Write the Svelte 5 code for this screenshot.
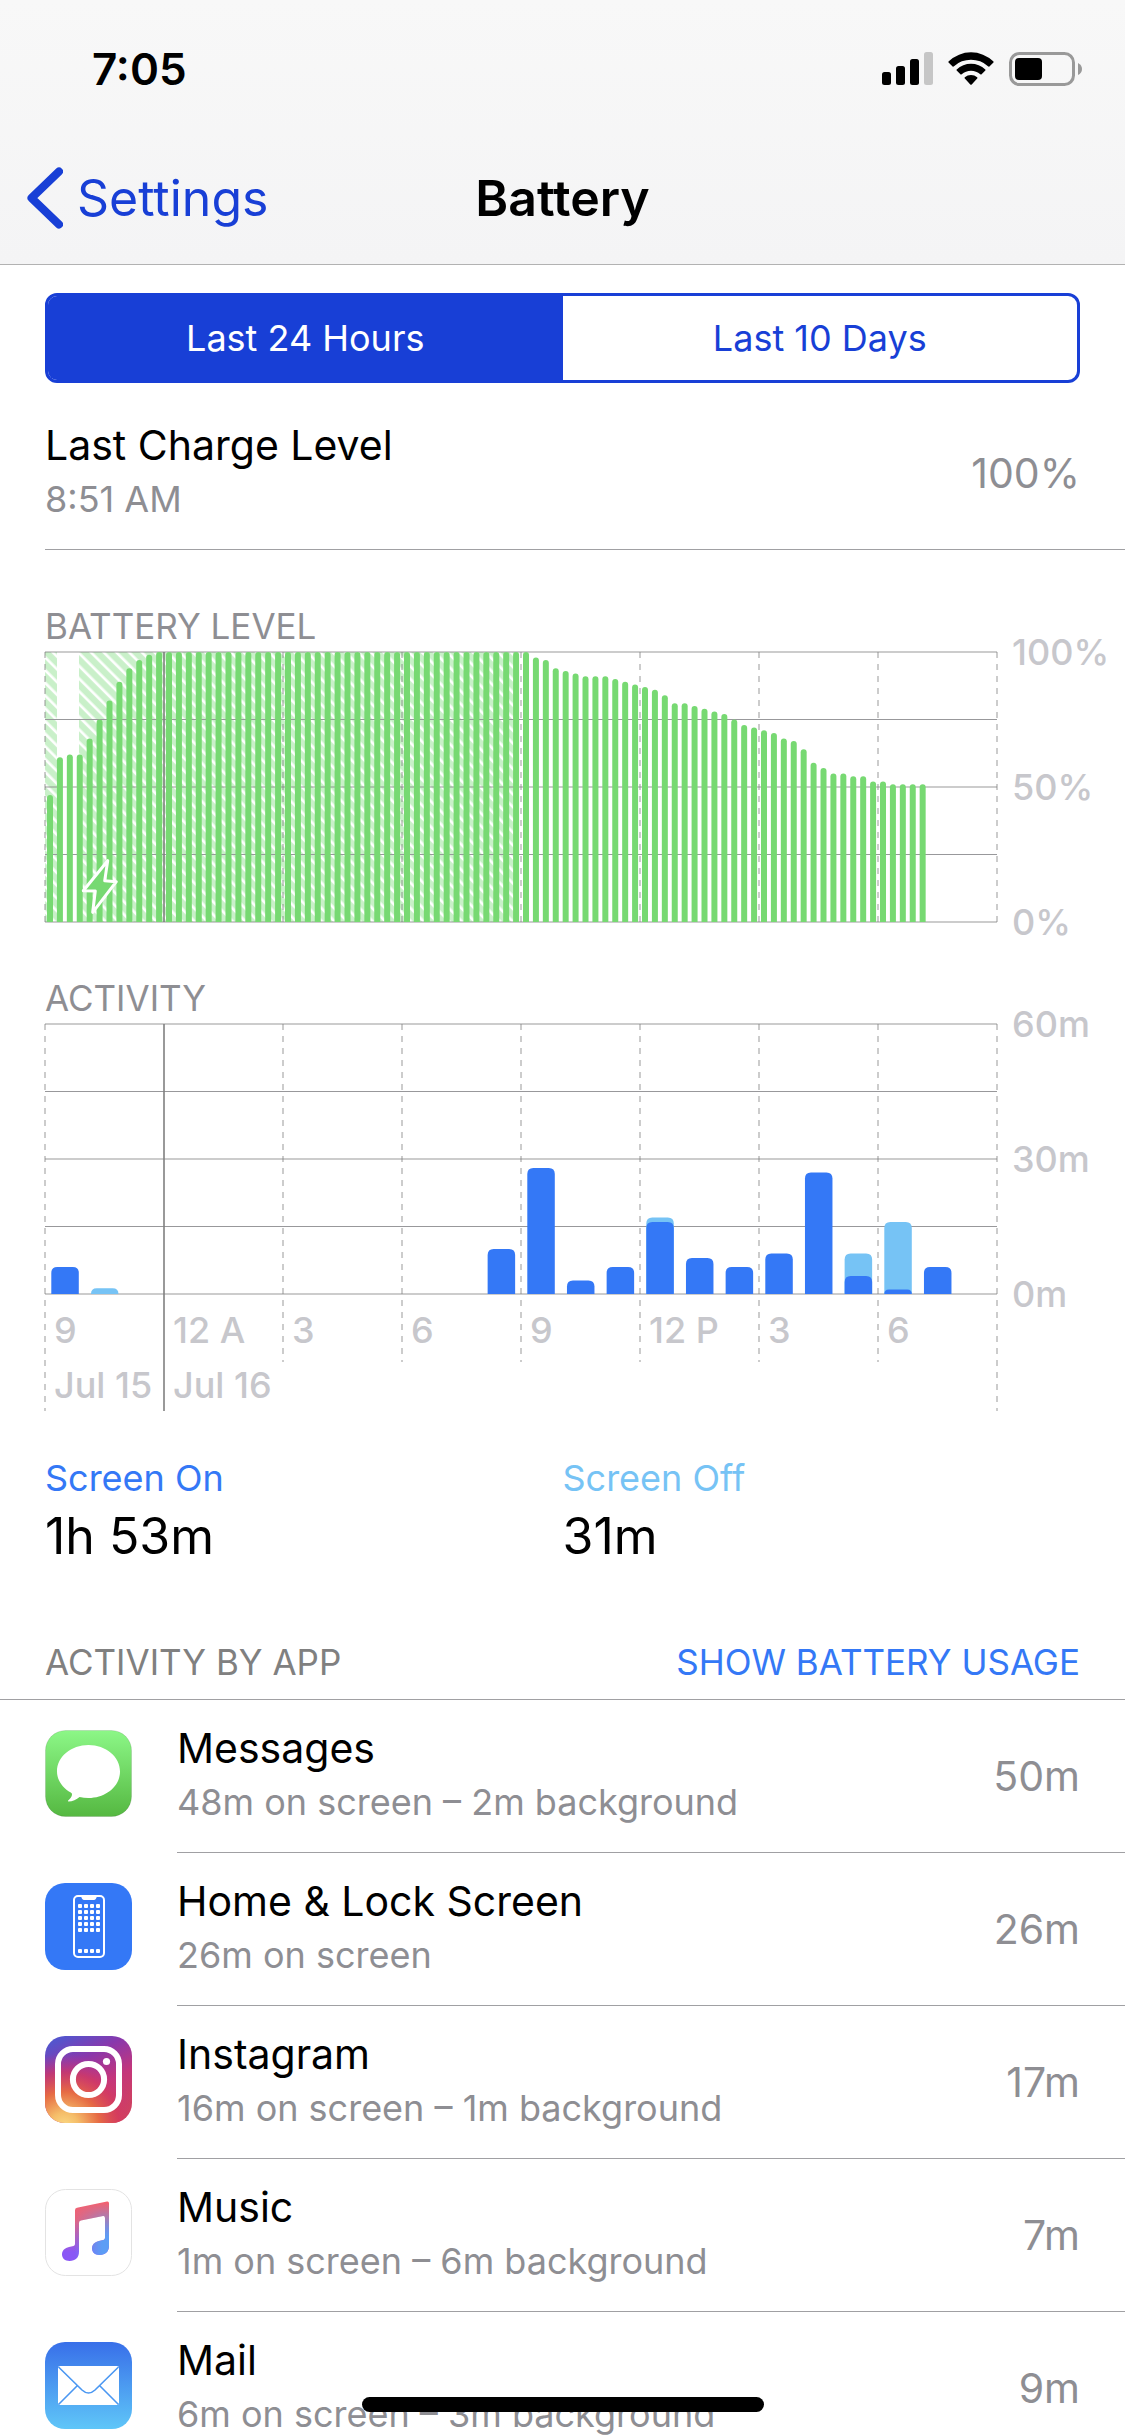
<script lang="ts">
  interface Hour {
    on: number
    off: number
  }

  interface AppUsage {
    id: string
    name: string
    detail: string
    total: string
  }

  const PLOT_WIDTH = 952
  const PLOT_HEIGHT = 270
  const BAR_STEP = PLOT_WIDTH / 96
  const HOUR_STEP = PLOT_WIDTH / 24

  // One sample every 15 minutes
  const levels: number[] = [
    47, 61, 62, 62, 68, 75, 82, 89, 94, 97, 99,
    ...Array(38).fill(100),
    98, 97, 94, 93, 92, 91, 91, 91, 90, 89, 88, 87, 86, 84, 81, 81, 80, 79, 78, 77,
    75, 73, 72, 71, 70, 68, 67, 64, 59, 57, 55, 55, 54, 54, 52, 52, 51, 51, 51, 51
  ]

  const charging = [
    { from: 0, to: 12 },
    { from: 34, to: 473 }
  ]

  const none: Hour = { on: 0, off: 0 }
  const hours: Hour[] = [
    { on: 6, off: 0 },
    { on: 0, off: 1.3 },
    ...Array(9).fill(none),
    { on: 10, off: 0 },
    { on: 28, off: 0 },
    { on: 3, off: 0 },
    { on: 6, off: 0 },
    { on: 16, off: 1 },
    { on: 8, off: 0 },
    { on: 6, off: 0 },
    { on: 9, off: 0 },
    { on: 27, off: 0 },
    { on: 4, off: 5 },
    { on: 1, off: 15 },
    { on: 6, off: 0 }
  ]

  const ticks = ['9', '12 A', '3', '6', '9', '12 P', '3', '6', '']

  const apps: AppUsage[] = [
    { id: 'messages', name: 'Messages', detail: '48m on screen – 2m background', total: '50m' },
    { id: 'home', name: 'Home & Lock Screen', detail: '26m on screen', total: '26m' },
    { id: 'instagram', name: 'Instagram', detail: '16m on screen – 1m background', total: '17m' },
    { id: 'music', name: 'Music', detail: '1m on screen – 6m background', total: '7m' },
    { id: 'mail', name: 'Mail', detail: '6m on screen – 3m background', total: '9m' }
  ]

  let range = $state('24h')

  // Bar standing on the baseline with rounded top corners
  function bar(x: number, width: number, height: number, radius: number) {
    const r = Math.min(radius, height)
    const top = PLOT_HEIGHT - height
    return `M${x} ${PLOT_HEIGHT}V${top + r}q0 ${-r} ${r} ${-r}h${width - 2 * r}q${r} 0 ${r} ${r}V${PLOT_HEIGHT}z`
  }
</script>

{#snippet gridLines()}
  <path class="line major" d="M0 0H952M0 135H952M0 270H952" />
  <path class="line minor" d="M0 67.5H952M0 202.5H952" />
{/snippet}

{#snippet axis(labels: string[])}
  {#each labels as label, i}
    <text x="967" y={i * 135 + 13}>{label}</text>
  {/each}
{/snippet}

<div class="screen">
  <header>
    <div class="status">
      <span class="time">7:05</span>
      <div class="indicators">
        <svg width="51" height="34" viewBox="0 0 51 34" aria-hidden="true">
          <rect x="0" y="20" width="9" height="13" rx="2.5" />
          <rect x="14" y="14" width="9" height="19" rx="2.5" />
          <rect x="28" y="7" width="9" height="26" rx="2.5" />
          <rect x="42" y="0" width="9" height="33" rx="2.5" fill="#c6c6c6" />
        </svg>
        <svg width="46" height="34" viewBox="0 0 46 34" aria-hidden="true">
          <path d="M0.8 9.3Q0 10 0.8 10.8L4.6 14.4Q5.2 14.9 6 14.3A25 25 0 0 1 40 14.3Q40.8 14.9 41.4 14.4L45.2 10.8Q46 10 45.2 9.3A32 32 0 0 0 0.8 9.3Z" />
          <path d="M8.7 17.4Q8.1 18 8.7 18.6L12.4 22.3Q13 22.8 13.7 22.3A14 14 0 0 1 32.3 22.3Q33 22.8 33.6 22.3L37.3 18.6Q37.9 18 37.3 17.4A21 21 0 0 0 8.7 17.4Z" />
          <path d="M16.8 25.2Q16.2 25.9 16.8 26.5L22.3 32.4Q23 33.1 23.7 32.4L29.2 26.5Q29.8 25.9 29.2 25.2A9.6 9.6 0 0 0 16.8 25.2Z" />
        </svg>
        <svg width="74" height="34" viewBox="0 0 74 34" aria-hidden="true">
          <rect x="1.5" y="1.5" width="63" height="31" rx="9" fill="none" stroke="#999" stroke-width="3" />
          <rect x="6" y="6" width="27" height="22" rx="4" />
          <path d="M69 11q4 2 4 6t-4 6z" fill="#999" />
        </svg>
      </div>
    </div>
    <nav>
      <a class="back" href="#settings">
        <svg width="36" height="62" viewBox="0 0 36 62" aria-hidden="true">
          <path d="M32 4.5L4.5 31L32 57.5" />
        </svg>
        Settings
      </a>
      <h1>Battery</h1>
    </nav>
  </header>

  <main>
    <div class="tabs">
      <button class:active={range === '24h'} onclick={() => range = '24h'}>Last 24 Hours</button>
      <button class:active={range === '10d'} onclick={() => range = '10d'}>Last 10 Days</button>
    </div>

    <div class="row charge">
      <div class="text">
        <span class="name">Last Charge Level</span>
        <span class="detail">8:51 AM</span>
      </div>
      <span class="total">100%</span>
    </div>

    <section class="chart">
      <h2>Battery Level</h2>
      <svg viewBox="0 0 1080 270" role="img" aria-label="Battery Level">
        <defs>
          <pattern id="hatch" width="9" height="9" patternUnits="userSpaceOnUse" patternTransform="rotate(45)">
            <rect width="9" height="9" fill="#c9f0c9" />
            <rect y="2.4" width="9" height="2.7" fill="#fff" />
          </pattern>
        </defs>
        {#each charging as span}
          <rect x={span.from} width={span.to - span.from} height="270" fill="url(#hatch)" />
        {/each}
        {#each ticks as _, i}
          {#if i !== 1}
            <path class="line dashed" d="M{i * 119} 0V270" />
          {/if}
        {/each}
        {@render gridLines()}
        {#each levels as level, i}
          <path class="level" d={bar(2 + i * BAR_STEP, 6, level * 2.7, 3)} />
        {/each}
        <path class="line midnight" d="M119 0V270" />
        <path class="bolt" d="M62.7 208.7L59.7 228.7L71.3 229.7L47.7 260.3L50.3 239L38.3 238.7Z" />
        {@render axis(['100%', '50%', '0%'])}
      </svg>
    </section>

    <section class="chart">
      <h2>Activity</h2>
      <svg viewBox="0 0 1080 387" role="img" aria-label="Activity">
        {@render gridLines()}
        {#each ticks as tick, i}
          {#if i === 1}
            <path class="line midnight" d="M119 0V387" />
          {:else}
            <path class="line dashed" d="M{i * 119} 0V{i === 0 || i === 8 ? 387 : 338}" />
          {/if}
          <text x={i * 119 + 9} y="319">{tick}</text>
        {/each}
        {#each hours as hour, i}
          {#if hour.off}
            <path class="off" d={bar(6.3 + i * HOUR_STEP, 27.5, (hour.on + hour.off) * 4.5, 6)} />
          {/if}
          {#if hour.on}
            <path class="on" d={bar(6.3 + i * HOUR_STEP, 27.5, hour.on * 4.5, 6)} />
          {/if}
        {/each}
        <text x="9" y="374">Jul 15</text>
        <text x="128" y="374">Jul 16</text>
        {@render axis(['60m', '30m', '0m'])}
      </svg>
    </section>

    <dl class="summary">
      <div>
        <dt class="screen-on">Screen On</dt>
        <dd>1h 53m</dd>
      </div>
      <div>
        <dt class="screen-off">Screen Off</dt>
        <dd>31m</dd>
      </div>
    </dl>

    <div class="list-head">
      <h2>Activity by App</h2>
      <button>Show Battery Usage</button>
    </div>

    <ul>
      {#each apps as app (app.id)}
        <li>
          <svg class="icon" viewBox="0 0 87 87" aria-hidden="true">
            {#if app.id === 'messages'}
              <linearGradient id="messages-bg" x2="0" y2="1">
                <stop offset="0" stop-color="#8cf787" />
                <stop offset="1" stop-color="#55b841" />
              </linearGradient>
              <rect x="0.5" y="0.5" width="86" height="86" rx="20" fill="url(#messages-bg)" stroke="#000" stroke-opacity="0.1" />
              <path fill="#fff" d="M43.5 15C60.8 15 75 26.7 75 41.5S60.8 68 43.5 68C40.4 68 37.4 67.6 34.6 66.9C31.5 69.5 27.5 71.3 23.5 71.6C22.8 71.6 22.7 70.9 23.2 70.5C25.4 68.7 27 66.5 27 64.5C27 63.6 26.6 63.1 25.8 62.6C17.5 57.8 12 50.2 12 41.5C12 26.7 26.2 15 43.5 15Z" />
            {:else if app.id === 'home'}
              <rect width="87" height="87" rx="20" fill="#3478f6" />
              <rect x="29" y="13" width="30" height="61" rx="4" fill="none" stroke="#fff" stroke-width="2" />
              <path fill="#fff" d="M36 13H52Q51 17 49 17H39Q37 17 36 13Z" />
              {#each [21, 27, 33, 39, 45, 66] as y}
                {#each [33, 39, 45, 51] as x}
                  <rect {x} {y} width="4" height="4" rx="1" fill="#fff" />
                {/each}
              {/each}
            {:else if app.id === 'instagram'}
              <linearGradient id="insta-base" x1="0.25" y1="0" x2="0.75" y2="1">
                <stop offset="0" stop-color="#5554cc" />
                <stop offset="0.28" stop-color="#8a37ab" />
                <stop offset="0.6" stop-color="#c4367b" />
                <stop offset="1" stop-color="#d24457" />
              </linearGradient>
              <radialGradient id="insta-glow" cx="0.22" cy="1.05" r="0.85">
                <stop offset="0" stop-color="#fbdc86" />
                <stop offset="0.2" stop-color="#f5bd69" />
                <stop offset="0.48" stop-color="#e66b44" />
                <stop offset="0.75" stop-color="#d6395f" stop-opacity="0.7" />
                <stop offset="1" stop-color="#c1368a" stop-opacity="0" />
              </radialGradient>
              <rect width="87" height="87" rx="20" fill="url(#insta-base)" />
              <rect width="87" height="87" rx="20" fill="url(#insta-glow)" />
              <g fill="none" stroke="#fff" stroke-width="6">
                <rect x="13" y="13" width="61" height="61" rx="15" />
                <circle cx="43.5" cy="43.5" r="15.6" />
              </g>
              <circle cx="61.5" cy="25.5" r="3.6" fill="#fff" />
            {:else if app.id === 'music'}
              <linearGradient id="note-tail" x2="0" y2="1">
                <stop offset="0" stop-color="#f7606c" />
                <stop offset="0.3" stop-color="#e9637c" />
                <stop offset="0.85" stop-color="#8a57f5" />
              </linearGradient>
              <linearGradient id="note-tint" x2="1" y2="0">
                <stop offset="0.25" stop-color="#5c9df5" stop-opacity="0" />
                <stop offset="0.85" stop-color="#5c9df5" />
              </linearGradient>
              <linearGradient id="note-fade" x2="0" y2="1">
                <stop offset="0.15" stop-color="#000" />
                <stop offset="0.55" stop-color="#fff" />
              </linearGradient>
              <mask id="note-mask">
                <rect width="87" height="87" fill="url(#note-fade)" />
              </mask>
              <rect x="0.5" y="0.5" width="86" height="86" rx="20" fill="#fff" stroke="#e3e3e3" />
              {#each ['#note-tail', '#note-tint'] as fill}
                <path
                  fill="url({fill})"
                  mask={fill === '#note-tint' ? 'url(#note-mask)' : undefined}
                  d="M32 18.7L62 12.6Q64 12.2 64 14.3V56.5C64 62.5 60.5 66 54.5 66C50 66 47 63.2 47 59.5C47 55.5 50 52.8 54 52L58.5 51.1Q60 50.7 60 49V29Q60 26.7 58 27.1L36 31.6Q34 32 34 34V62.5C34 68.5 30.5 72 24.5 72C20 72 17 69.2 17 65.5C17 61.5 20 58.8 24 58L28.5 57.1Q30 56.7 30 55V21.2Q30 19.1 32 18.7Z"
                />
              {/each}
            {:else}
              <linearGradient id="mail-bg" x2="0" y2="1">
                <stop offset="0" stop-color="#386fe9" />
                <stop offset="1" stop-color="#5fc6f8" />
              </linearGradient>
              <rect width="87" height="87" rx="20" fill="url(#mail-bg)" />
              <rect x="13" y="24" width="61" height="39" rx="2" fill="#fff" />
              <g fill="none" stroke="#4a97f2" stroke-width="1.6">
                <path d="M13.5 25L37 48Q43.5 54 50 48L73.5 25" />
                <path d="M13.5 62.5L32.5 43.5M73.5 62.5L54.5 43.5" />
              </g>
            {/if}
          </svg>
          <div class="row">
            <div class="text">
              <span class="name">{app.name}</span>
              <span class="detail">{app.detail}</span>
            </div>
            <span class="total">{app.total}</span>
          </div>
        </li>
      {/each}
    </ul>
  </main>

  <div class="home-indicator"></div>
</div>

<style>
  :global(body) {
    margin: 0;
    background: #fff;
  }

  .screen {
    display: flex;
    flex-direction: column;
    height: 100vh;
    overflow: hidden;
    font-family: Inter, "Liberation Sans", sans-serif;
    color: #000;
  }

  header {
    flex: none;
    background: linear-gradient(#f8f8f8, #f4f4f5);
    border-bottom: 1px solid #b2b2b2;
  }

  .status {
    display: flex;
    justify-content: space-between;
    align-items: center;
    height: 138px;
    padding: 0 42px 0 92px;
    box-sizing: border-box;
  }

  .time {
    font-size: 44px;
    font-weight: 600;
  }

  .indicators {
    display: flex;
    gap: 15px;
  }

  nav {
    display: grid;
    grid-template-columns: 1fr auto 1fr;
    align-items: center;
    height: 126px;
    padding: 0 27px 6px;
    box-sizing: border-box;
  }

  .back {
    display: flex;
    align-items: center;
    gap: 14px;
    font-size: 50px;
    color: #183fd6;
    text-decoration: none;
  }

  .back path {
    fill: none;
    stroke: #183fd6;
    stroke-width: 8;
    stroke-linecap: round;
    stroke-linejoin: round;
  }

  h1 {
    margin: 0;
    font-size: 50px;
    font-weight: 600;
  }

  main {
    flex: 1;
    min-height: 0;
    overflow-y: auto;
    scrollbar-width: none;
  }

  button {
    margin: 0;
    padding: 0;
    border: none;
    background: none;
    font: inherit;
    cursor: pointer;
  }

  .tabs {
    display: grid;
    grid-template-columns: 1fr 1fr;
    height: 90px;
    margin: 28px 45px 14px;
    box-sizing: border-box;
    border: 3px solid #183fd6;
    border-radius: 12px;
    overflow: hidden;
  }

  .tabs button {
    font-size: 36px;
    color: #183fd6;
  }

  .tabs .active {
    background: #183fd6;
    color: #fff;
  }

  .row {
    flex: 1;
    display: flex;
    justify-content: space-between;
    align-items: center;
    height: 153px;
    padding-right: 45px;
    box-sizing: border-box;
    border-bottom: 1px solid #a0a0a3;
  }

  .charge {
    margin-left: 45px;
  }

  .text {
    display: flex;
    flex-direction: column;
    padding-bottom: 2px;
    line-height: 54px;
  }

  .name {
    font-size: 41px;
  }

  .detail {
    font-size: 36px;
    color: #8e8e93;
  }

  .total {
    font-size: 41px;
    color: #8e8e93;
  }

  h2 {
    margin: 0;
    font-size: 35px;
    font-weight: 400;
    line-height: 44px;
    text-transform: uppercase;
    color: #8e8e93;
  }

  .chart {
    margin: 54px 0 0 45px;
  }

  .chart h2 {
    margin-bottom: 4px;
  }

  .chart svg {
    display: block;
    width: 100%;
    overflow: visible;
  }

  .chart text {
    font-size: 36px;
    font-weight: 500;
    fill: #c7c7cc;
  }

  .line {
    fill: none;
    stroke: #7f7f7f;
    stroke-opacity: 0.4;
    stroke-width: 2;
  }

  .minor {
    stroke: #98989b;
    stroke-opacity: 1;
    stroke-width: 1;
    shape-rendering: crispEdges;
  }

  .dashed {
    stroke-dasharray: 6 6;
  }

  .midnight {
    stroke-opacity: 0.8;
  }

  .level {
    fill: #77d972;
  }

  .bolt {
    fill: #77d972;
    stroke: #fff;
    stroke-width: 3;
    stroke-linejoin: round;
  }

  .on {
    fill: #3478f6;
  }

  .off {
    fill: #76c3f5;
  }

  .summary {
    display: grid;
    grid-template-columns: 1fr 1fr;
    margin: 45px 45px 74px;
  }

  dt {
    margin-bottom: 6px;
    font-size: 36px;
    line-height: 44px;
  }

  dd {
    margin: 0;
    font-size: 50px;
    line-height: 60px;
  }

  .screen-on {
    color: #3478f6;
  }

  .screen-off {
    color: #76c3f5;
  }

  .list-head {
    display: flex;
    justify-content: space-between;
    padding: 0 45px 15px;
    border-bottom: 1px solid #a0a0a3;
  }

  .list-head h2 {
    color: #808080;
  }

  .list-head button {
    font-size: 35px;
    line-height: 44px;
    text-transform: uppercase;
    color: #3478f6;
  }

  ul {
    margin: 0;
    padding: 0;
    list-style: none;
  }

  li {
    display: flex;
    align-items: flex-start;
    gap: 45px;
    padding-left: 45px;
  }

  .icon {
    flex: none;
    width: 87px;
    height: 87px;
    margin-top: 30px;
  }

  .home-indicator {
    position: fixed;
    left: 50%;
    bottom: 24px;
    width: 402px;
    height: 15px;
    border-radius: 8px;
    background: #000;
    transform: translateX(-50%);
  }
</style>
